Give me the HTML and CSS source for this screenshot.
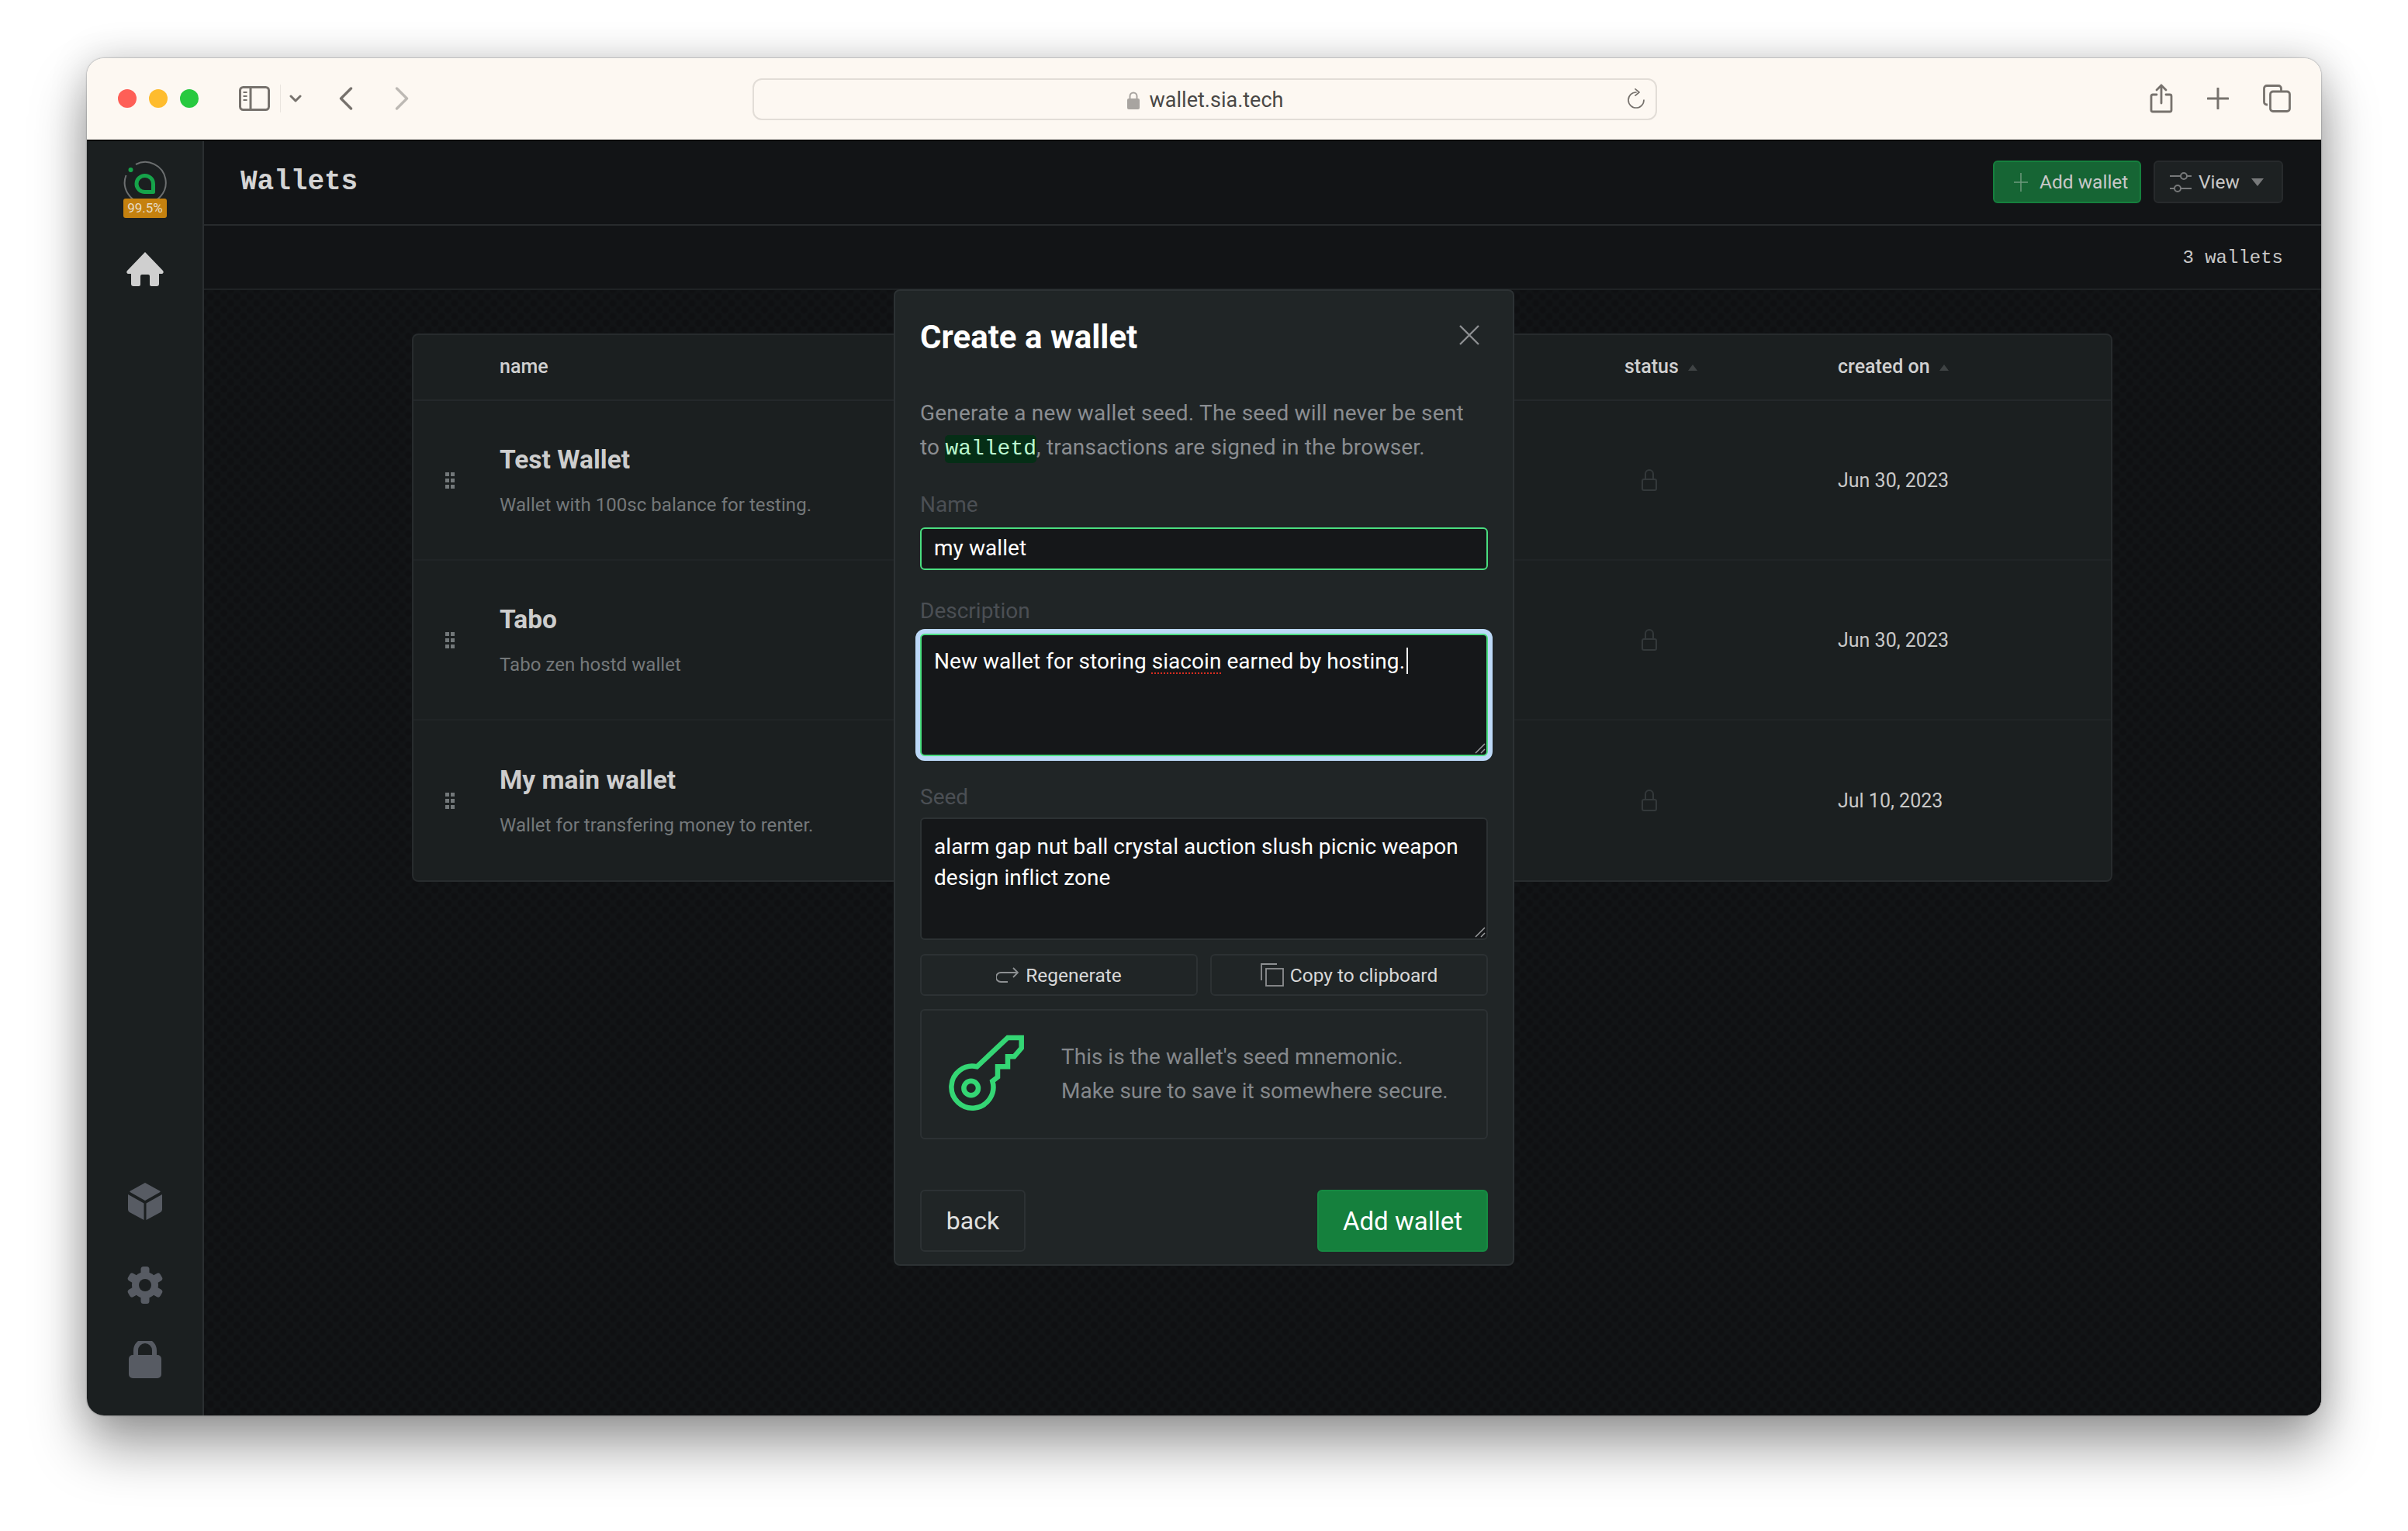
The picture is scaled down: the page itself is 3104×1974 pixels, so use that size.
FILE: index.html
```html
<!DOCTYPE html>
<html lang="en">
<head>
    <meta charset="UTF-8">
    <title>Wallets</title>
    <link rel="stylesheet" href="styles.css">
</head>
<body>
    <div class="window">
        <!-- Safari toolbar -->
        <div class="titlebar">
            <div class="lights">
                <span class="light red"></span>
                <span class="light yellow"></span>
                <span class="light green"></span>
            </div>
            <div class="tools-left">
                <svg class="tb-sidebar" width="40" height="32" viewBox="0 0 40 32" fill="none" stroke="#77726d" stroke-width="3">
                    <rect x="1.5" y="1.5" width="37" height="29" rx="4"/>
                    <path d="M15 2v28"/>
                    <path d="M5.5 8h5M5.5 13h5M5.5 18h5" stroke-width="2"/>
                </svg>
                <span class="tb-divider"></span>
                <svg class="tb-caret" width="16" height="10" viewBox="0 0 16 10" fill="none" stroke="#77726d" stroke-width="3" stroke-linecap="round" stroke-linejoin="round">
                    <path d="M2 2l6 6 6-6"/>
                </svg>
                <svg class="tb-back" width="18" height="30" viewBox="0 0 18 30" fill="none" stroke="#77726d" stroke-width="3.4" stroke-linecap="round" stroke-linejoin="round">
                    <path d="M15.5 2L2.5 15l13 13"/>
                </svg>
                <svg class="tb-forward" width="18" height="30" viewBox="0 0 18 30" fill="none" stroke="#bdb9b4" stroke-width="3.4" stroke-linecap="round" stroke-linejoin="round">
                    <path d="M2.5 2l13 13-13 13"/>
                </svg>
            </div>
            <div class="addressbar">
                <div class="address">
                    <svg width="18" height="24" viewBox="0 0 18 24" fill="none">
                        <path d="M4.5 11V7a4.5 4.5 0 0 1 9 0v4" stroke="#a8a4a0" stroke-width="2"/>
                        <rect x="1" y="10" width="16" height="14" rx="2" fill="#a8a4a0"/>
                    </svg>
                    <span>wallet.sia.tech</span>
                </div>
                <svg class="reload" width="22" height="26" viewBox="0 0 22 26" fill="none" stroke="#77726d" stroke-width="1.7" stroke-linecap="round" stroke-linejoin="round">
                    <path d="M11 5A10 10 0 1 0 21 15"/>
                    <path d="M10 .8L15 5l-5 4.200"/>
                </svg>
            </div>
            <div class="tools-right">
                <svg width="30" height="38" viewBox="0 0 30 38" fill="none" stroke="#77726d" stroke-width="2.8" stroke-linecap="round" stroke-linejoin="round">
                    <path d="M9 14H4a2 2 0 0 0-2 2v18a2 2 0 0 0 2 2h22a2 2 0 0 0 2-2V16a2 2 0 0 0-2-2h-5"/>
                    <path d="M15 25V2M9 8l6-6 6 6"/>
                </svg>
                <svg width="28" height="28" viewBox="0 0 28 28" fill="none" stroke="#77726d" stroke-width="3" stroke-linecap="round">
                    <path d="M14 1v26M1 14h26"/>
                </svg>
                <svg width="36" height="36" viewBox="0 0 36 36" fill="none" stroke="#77726d" stroke-width="2.8">
                    <path d="M6 26H5a3.500 3.500 0 0 1-3.500-3.500V5A3.500 3.500 0 0 1 5 1.500h15A3.500 3.500 0 0 1 23.500 5v3"/>
                    <rect x="9.500" y="9" width="25" height="25.500" rx="3.500"/>
                </svg>
            </div>
        </div>

        <div class="app">
            <aside class="sidebar">
                <div class="logo">
                    <svg width="56" height="60" viewBox="0 0 56 60" fill="none">
                        <path d="M16 5A26.500 26.500 0 1 1 3.500 19" stroke="#6c6f70" stroke-width="2"/>
                        <circle cx="9.500" cy="12" r="3" fill="#16a34a"/>
                        <path d="M38.500 40.500H27.750A10.750 10.500 0 1 1 38.500 30Z" stroke="#16a34a" stroke-width="5" stroke-linejoin="round"/>
                    </svg>
                    <span class="badge">99.5%</span>
                </div>
                <svg class="nav-home" width="50" height="44" viewBox="0 0 50 44" fill="#cfcfcf">
                    <path d="M25 0L48 24c1.500 2 .5 4-2 4h-3v13a3 3 0 0 1-3 3h-7a2 2 0 0 1-2-2V31a2 2 0 0 0-2-2h-8a2 2 0 0 0-2 2v11a2 2 0 0 1-2 2h-7a3 3 0 0 1-3-3V28H4c-2.500 0-3.500-2-2-4Z"/>
                </svg>
                <div class="nav-bottom">
                    <svg class="nav-cube" width="44" height="48" viewBox="0 0 44 48" fill="#575b63">
                        <path d="M22 0l19 10.500c1 .5 1 1.200 0 1.800L22 23 3 12.300c-1-.6-1-1.300 0-1.800Z"/>
                        <path d="M0 15l20.500 11.500V48L2 38a4 4 0 0 1-2-3.500Z"/>
                        <path d="M44 15L23.500 26.500V48L42 38a4 4 0 0 0 2-3.500Z"/>
                    </svg>
                    <svg width="46" height="48" viewBox="0 0 46 48" fill="#575b63">
                        <rect x="17.500" y="0" width="11" height="48" rx="3.500"/>
                        <rect x="17.500" y="0" width="11" height="48" rx="3.500" transform="rotate(60 23 24)"/>
                        <rect x="17.500" y="0" width="11" height="48" rx="3.500" transform="rotate(120 23 24)"/>
                        <circle cx="23" cy="24" r="17"/>
                        <circle cx="23" cy="24" r="8" fill="#1b1f20"/>
                    </svg>
                    <svg width="44" height="48" viewBox="0 0 44 48" fill="#575b63">
                        <path d="M10 20v-8a12 12 0 0 1 24 0v8" fill="none" stroke="#575b63" stroke-width="6"/>
                        <rect x="1" y="18" width="42" height="30" rx="5"/>
                    </svg>
                </div>
            </aside>

            <main class="main">
                <header class="navbar">
                    <h1>Wallets</h1>
                    <div class="nav-actions">
                        <button class="btn-add">
                            <svg width="18" height="26" viewBox="0 0 18 26" fill="none" stroke="#6f9a7d" stroke-width="1.500"><path d="M9 1v24M0 13h18"/></svg>
                            Add wallet
                        </button>
                        <button class="btn-view">
                            <svg width="30" height="30" viewBox="0 0 30 30" fill="none" stroke="#77797a" stroke-width="2">
                                <path d="M1 7h14M23 7h6M1 23h6M15 23h14"/>
                                <circle cx="19" cy="7" r="4"/>
                                <circle cx="11" cy="23" r="4"/>
                            </svg>
                            View
                            <span class="caret-down"></span>
                        </button>
                    </div>
                </header>
                <div class="subbar">3 wallets</div>

                <section class="content">
                    <div class="table">
                        <div class="thead">
                            <div></div>
                            <div class="th">name</div>
                            <div class="th">status <span class="caret-up"></span></div>
                            <div class="th">created on <span class="caret-up"></span></div>
                        </div>

                        <div class="row">
                            <div class="handle"><span></span><span></span><span></span><span></span><span></span><span></span></div>
                            <div>
                                <div class="wallet-name">Test Wallet</div>
                                <div class="wallet-desc">Wallet with 100sc balance for testing.</div>
                            </div>
                            <div class="status">
                                <svg width="20" height="28" viewBox="0 0 20 28" fill="none" stroke="#33383a" stroke-width="2"><path d="M5 13V6a5 5 0 0 1 10 0v7"/><rect x="1" y="13" width="18" height="14" rx="2"/></svg>
                            </div>
                            <div class="date">Jun 30, 2023</div>
                        </div>

                        <div class="row">
                            <div class="handle"><span></span><span></span><span></span><span></span><span></span><span></span></div>
                            <div>
                                <div class="wallet-name">Tabo</div>
                                <div class="wallet-desc">Tabo zen hostd wallet</div>
                            </div>
                            <div class="status">
                                <svg width="20" height="28" viewBox="0 0 20 28" fill="none" stroke="#33383a" stroke-width="2"><path d="M5 13V6a5 5 0 0 1 10 0v7"/><rect x="1" y="13" width="18" height="14" rx="2"/></svg>
                            </div>
                            <div class="date">Jun 30, 2023</div>
                        </div>

                        <div class="row">
                            <div class="handle"><span></span><span></span><span></span><span></span><span></span><span></span></div>
                            <div>
                                <div class="wallet-name">My main wallet</div>
                                <div class="wallet-desc">Wallet for transfering money to renter.</div>
                            </div>
                            <div class="status">
                                <svg width="20" height="28" viewBox="0 0 20 28" fill="none" stroke="#33383a" stroke-width="2"><path d="M5 13V6a5 5 0 0 1 10 0v7"/><rect x="1" y="13" width="18" height="14" rx="2"/></svg>
                            </div>
                            <div class="date">Jul 10, 2023</div>
                        </div>
                    </div>
                </section>
            </main>
        </div>

        <!-- Dialog over the table -->
        <div class="overlay">
            <div class="modal">
                <div class="modal-head">
                    <h2>Create a wallet</h2>
                    <svg class="close" width="26" height="26" viewBox="0 0 26 26" fill="none" stroke="#8d9092" stroke-width="2.400"><path d="M1 1l24 24M25 1L1 25"/></svg>
                </div>
                <p class="intro">Generate a new wallet seed. The seed will never be sent<br>to <code>walletd</code>, transactions are signed in the browser.</p>

                <label class="field-label label-name">Name</label>
                <div class="input valid">my wallet</div>

                <label class="field-label label-next">Description</label>
                <div class="textarea valid focused">New wallet for storing <span class="typo">siacoin</span> earned by hosting.<span class="text-caret"></span>
                    <svg class="grip" width="14" height="14" viewBox="0 0 14 14" fill="none" stroke="#9a9c9e" stroke-width="1.500"><path d="M1 13L13 1M8 13l5-5"/></svg>
                </div>

                <label class="field-label label-next">Seed</label>
                <div class="textarea seed">alarm gap nut ball crystal auction slush picnic weapon design inflict zone
                    <svg class="grip" width="14" height="14" viewBox="0 0 14 14" fill="none" stroke="#9a9c9e" stroke-width="1.500"><path d="M1 13L13 1M8 13l5-5"/></svg>
                </div>

                <div class="seed-actions">
                    <button class="btn-ghost">
                        <svg width="30" height="22" viewBox="0 0 30 22" fill="none" stroke="#8d9092" stroke-width="1.800"><path d="M28 8H6a4.500 4.500 0 0 0 0 12h9"/><path d="M22 2l6 6-6 6"/></svg>
                        Regenerate
                    </button>
                    <button class="btn-ghost">
                        <svg width="30" height="30" viewBox="0 0 30 30" fill="none" stroke="#8d9092" stroke-width="1.800"><path d="M1 22V1h20"/><rect x="7" y="7" width="22" height="22"/></svg>
                        Copy to clipboard
                    </button>
                </div>

                <div class="notice">
                    <svg class="key" width="100" height="100" viewBox="20 14 100 100" fill="none" stroke="#34d674" stroke-width="6.500">
                        <path d="M59.300 57.300L99 20h17.700v13.300l-9.400 11H99v13H86v13.400l-6.700 5.300A27 27 0 1 1 59.300 57.300Z"/>
                        <circle cx="51.700" cy="85" r="9.300"/>
                    </svg>
                    <p>This is the wallet's seed mnemonic.<br>Make sure to save it somewhere secure.</p>
                </div>

                <div class="modal-foot">
                    <button class="btn-back">back</button>
                    <button class="btn-submit">Add wallet</button>
                </div>
            </div>
        </div>
    </div>
</body>
</html>
```

FILE: styles.css
```css
* {
    box-sizing: border-box;
}
html, body {
    height: 100%;
    overflow: hidden;
}
body {
    margin: 0;
    background-color: #fff;
    font-family: Roboto, sans-serif;
    color: #ccc;
}
button {
    font-family: inherit;
}

/* Window */
.window {
    position: relative;
    width: 2880px;
    height: 1750px;
    margin: 75px 0 0 112px;
    border-radius: 22px;
    overflow: hidden;
    display: flex;
    flex-direction: column;
    box-shadow: 0 40px 70px rgba(0, 0, 0, 0.38), 0 0 50px rgba(0, 0, 0, 0.16), 0 0 2px rgba(0, 0, 0, 0.5);
}

/* Safari toolbar */
.titlebar {
    position: relative;
    flex: none;
    height: 107px;
    display: flex;
    align-items: center;
    padding: 0 39px 1px 40px;
    background-color: #fdf8f2;
    border-bottom: 2px solid #050505;
}
.lights {
    display: flex;
    gap: 16px;
}
.light {
    width: 24px;
    height: 24px;
    border-radius: 50%;
}
.red { background-color: #fe5f57; }
.yellow { background-color: #febc2e; }
.green { background-color: #27c93f; }
.tools-left {
    display: flex;
    align-items: center;
    margin-left: 52px;
}
.tb-divider {
    width: 1px;
    height: 36px;
    margin-left: 13px;
    background-color: #eae5df;
}
.tb-caret { margin-left: 11px; }
.tb-back { margin-left: 48px; }
.tb-forward { margin-left: 54px; }
.addressbar {
    position: absolute;
    left: 858px;
    top: 26px;
    width: 1166px;
    height: 54px;
    display: flex;
    align-items: center;
    justify-content: center;
    padding-top: 2px;
    border: 2px solid #e2ddd7;
    border-radius: 12px;
}
.address {
    display: flex;
    align-items: center;
    gap: 12px;
    font-size: 27px;
    color: #4a4846;
}
.reload {
    position: absolute;
    right: 14px;
    top: 11px;
}
.tools-right {
    margin-left: auto;
    display: flex;
    align-items: center;
    gap: 44px;
}

/* App */
.app {
    flex: 1;
    display: flex;
    min-height: 0;
}
.sidebar {
    flex: none;
    width: 151px;
    display: flex;
    flex-direction: column;
    align-items: center;
    padding: 25px 0 0 1px;
    background-color: #1b1f20;
    border-right: 2px solid #2a2e30;
}
.logo {
    position: relative;
    height: 76px;
    width: 56px;
}
.badge {
    position: absolute;
    left: 0;
    top: 49px;
    width: 56px;
    height: 25px;
    border-radius: 3px;
    background-color: #c5810f;
    color: #e6dcc8;
    font-size: 17px;
    line-height: 25px;
    text-align: center;
}
.nav-home {
    margin-top: 42px;
}
.nav-bottom {
    margin-top: auto;
    padding-bottom: 48px;
    display: flex;
    flex-direction: column;
    align-items: center;
    gap: 48px;
}
.nav-cube {
    margin-bottom: 12px;
}
.main {
    flex: 1;
    min-width: 0;
    display: flex;
    flex-direction: column;
    background-color: #121416;
}
.navbar {
    flex: none;
    height: 109px;
    display: flex;
    align-items: center;
    justify-content: space-between;
    padding: 0 49px 2px 47px;
    border-bottom: 2px solid #272a2c;
}
h1 {
    margin: 0;
    font-family: "Liberation Mono", monospace;
    font-size: 36px;
    font-weight: 700;
    color: #d4d4d4;
}
.nav-actions {
    display: flex;
    gap: 16px;
}
.nav-actions button {
    height: 55px;
    display: flex;
    align-items: center;
    border-radius: 6px;
    font-size: 24.5px;
    color: #c8c8c8;
}
.btn-add {
    width: 191px;
    gap: 15px;
    padding: 0 0 0 25px;
    background-color: #166534;
    border: 2px solid #15803d;
}
.btn-view {
    width: 167px;
    gap: 8px;
    padding: 0 0 0 18px;
    background-color: #1d2122;
    border: 2px solid #272a2c;
}
.caret-down {
    width: 0;
    height: 0;
    margin-left: 7px;
    border-left: 8px solid transparent;
    border-right: 8px solid transparent;
    border-top: 10px solid #77797a;
}
.subbar {
    flex: none;
    height: 83px;
    padding: 2px 49px 0 0;
    display: flex;
    align-items: center;
    justify-content: flex-end;
    font-family: "Liberation Mono", monospace;
    font-size: 24px;
    color: #c8c8c8;
    border-bottom: 2px solid #1f2224;
}
.content {
    flex: 1;
    padding: 56px 269px 0 268px;
    background-color: #121416;
    background-image: radial-gradient(circle, #0f1012 3px, transparent 6px), radial-gradient(circle, #0f1012 3px, transparent 6px);
    background-size: 17px 17px;
    background-position: 0 0, 8.5px 8.5px;
}

/* Table */
.table {
    background-color: #1b1f20;
    border: 2px solid #272b2d;
    border-radius: 8px;
}
.thead, .row {
    display: grid;
    grid-template-columns: 111px 1450px 275px 1fr;
    align-items: center;
}
.thead {
    height: 85px;
    padding-bottom: 2px;
    border-bottom: 2px solid #24282a;
}
.th {
    font-size: 25px;
    font-weight: 500;
    color: #d0d0d0;
}
.caret-up {
    display: inline-block;
    width: 0;
    height: 0;
    margin: 0 0 3px 6px;
    border-left: 6px solid transparent;
    border-right: 6px solid transparent;
    border-bottom: 8px solid #3f4344;
}
.row {
    height: 206px;
    border-bottom: 2px solid #202426;
}
.row:last-child {
    border-bottom: none;
}
.handle {
    display: grid;
    grid-template-columns: 5px 5px;
    column-gap: 2px;
    row-gap: 3px;
    justify-content: start;
    margin-left: 41px;
}
.handle span {
    width: 5px;
    height: 5px;
    background-color: #73787a;
}
.wallet-name {
    font-size: 33.5px;
    font-weight: 700;
    color: #cdcdcd;
}
.wallet-desc {
    margin-top: 25px;
    font-size: 24px;
    letter-spacing: 0.05px;
    color: #74787a;
}
.status {
    padding-left: 22px;
    height: 28px;
}
.date {
    font-size: 25px;
    color: #c8c8c8;
}

/* Dialog */
.overlay {
    position: absolute;
    inset: 298px 0 0 0;
    display: flex;
    justify-content: center;
    align-items: flex-start;
}
.modal {
    width: 800px;
    height: 1259px;
    padding: 0 32px;
    background-color: #202526;
    border: 2px solid #2c3133;
    border-radius: 8px;
}
.modal-head {
    height: 84px;
    padding-top: 36px;
    display: flex;
    justify-content: space-between;
    align-items: center;
}
h2 {
    margin: 0;
    font-size: 42px;
    line-height: 50px;
    font-weight: 700;
    color: #fff;
}
.close {
    margin-right: 11px;
    margin-top: -7px;
}
.intro {
    margin: 52px 0 0;
    font-size: 28px;
    line-height: 44px;
    letter-spacing: 0.2px;
    color: #8a8d91;
}
code {
    display: inline-block;
    height: 36px;
    line-height: 36px;
    letter-spacing: 0;
    border-radius: 5px;
    background-color: #052e16;
    color: #bbf7d0;
    font-family: "Liberation Mono", monospace;
    font-size: 28px;
}
.field-label {
    display: block;
    font-size: 28px;
    line-height: 36px;
    color: #4b4f54;
}
.label-name { margin-top: 34px; }
.label-next { margin-top: 35px; }
.input, .textarea {
    margin-top: 11px;
    background-color: #151719;
    border: 2px solid #2c3133;
    border-radius: 6px;
    font-size: 28px;
    letter-spacing: 0.05px;
    color: #fff;
}
.input {
    height: 55px;
    line-height: 50px;
    padding: 0 16px;
}
.textarea {
    position: relative;
    height: 158px;
    padding: 14px 16px;
    line-height: 40px;
}
.textarea.seed {
    margin-top: 8px;
    padding-top: 16px;
}
.valid {
    border-color: #4ade80;
}
.focused {
    box-shadow: 0 0 0 6px #bcd9f7;
}
.grip {
    position: absolute;
    right: 1px;
    bottom: 1px;
}
.typo {
    text-decoration: underline dotted #d92d20 2px;
    text-underline-offset: 5px;
}
.text-caret {
    display: inline-block;
    width: 2px;
    height: 34px;
    margin-left: 2px;
    vertical-align: -7px;
    background-color: #fff;
}
.seed-actions {
    display: grid;
    grid-template-columns: 1fr 1fr;
    gap: 16px;
    margin-top: 18px;
}
.btn-ghost {
    height: 54px;
    display: flex;
    align-items: center;
    justify-content: center;
    gap: 8px;
    background: none;
    border: 2px solid #2c3133;
    border-radius: 6px;
    font-size: 24.5px;
    color: #d8d8d8;
}
.notice {
    height: 168px;
    margin-top: 17px;
    padding-left: 32px;
    display: flex;
    align-items: center;
    gap: 48px;
    border: 2px solid #2c3133;
    border-radius: 6px;
}
.notice p {
    margin: 0;
    font-size: 28px;
    line-height: 44px;
    color: #85888c;
}
.key {
    flex: none;
    margin-top: -7px;
}
.modal-foot {
    margin-top: 65px;
    display: flex;
    justify-content: space-between;
}
.modal-foot button {
    height: 80px;
    border-radius: 6px;
    font-size: 33px;
}
.btn-back {
    width: 136px;
    background: none;
    border: 2px solid #2c3133;
    color: #e0e0e0;
}
.modal-foot .btn-back {
    font-size: 32px;
}
.btn-submit {
    width: 220px;
    background-color: #15803d;
    border: 2px solid #168a42;
    color: #fff;
}
```
